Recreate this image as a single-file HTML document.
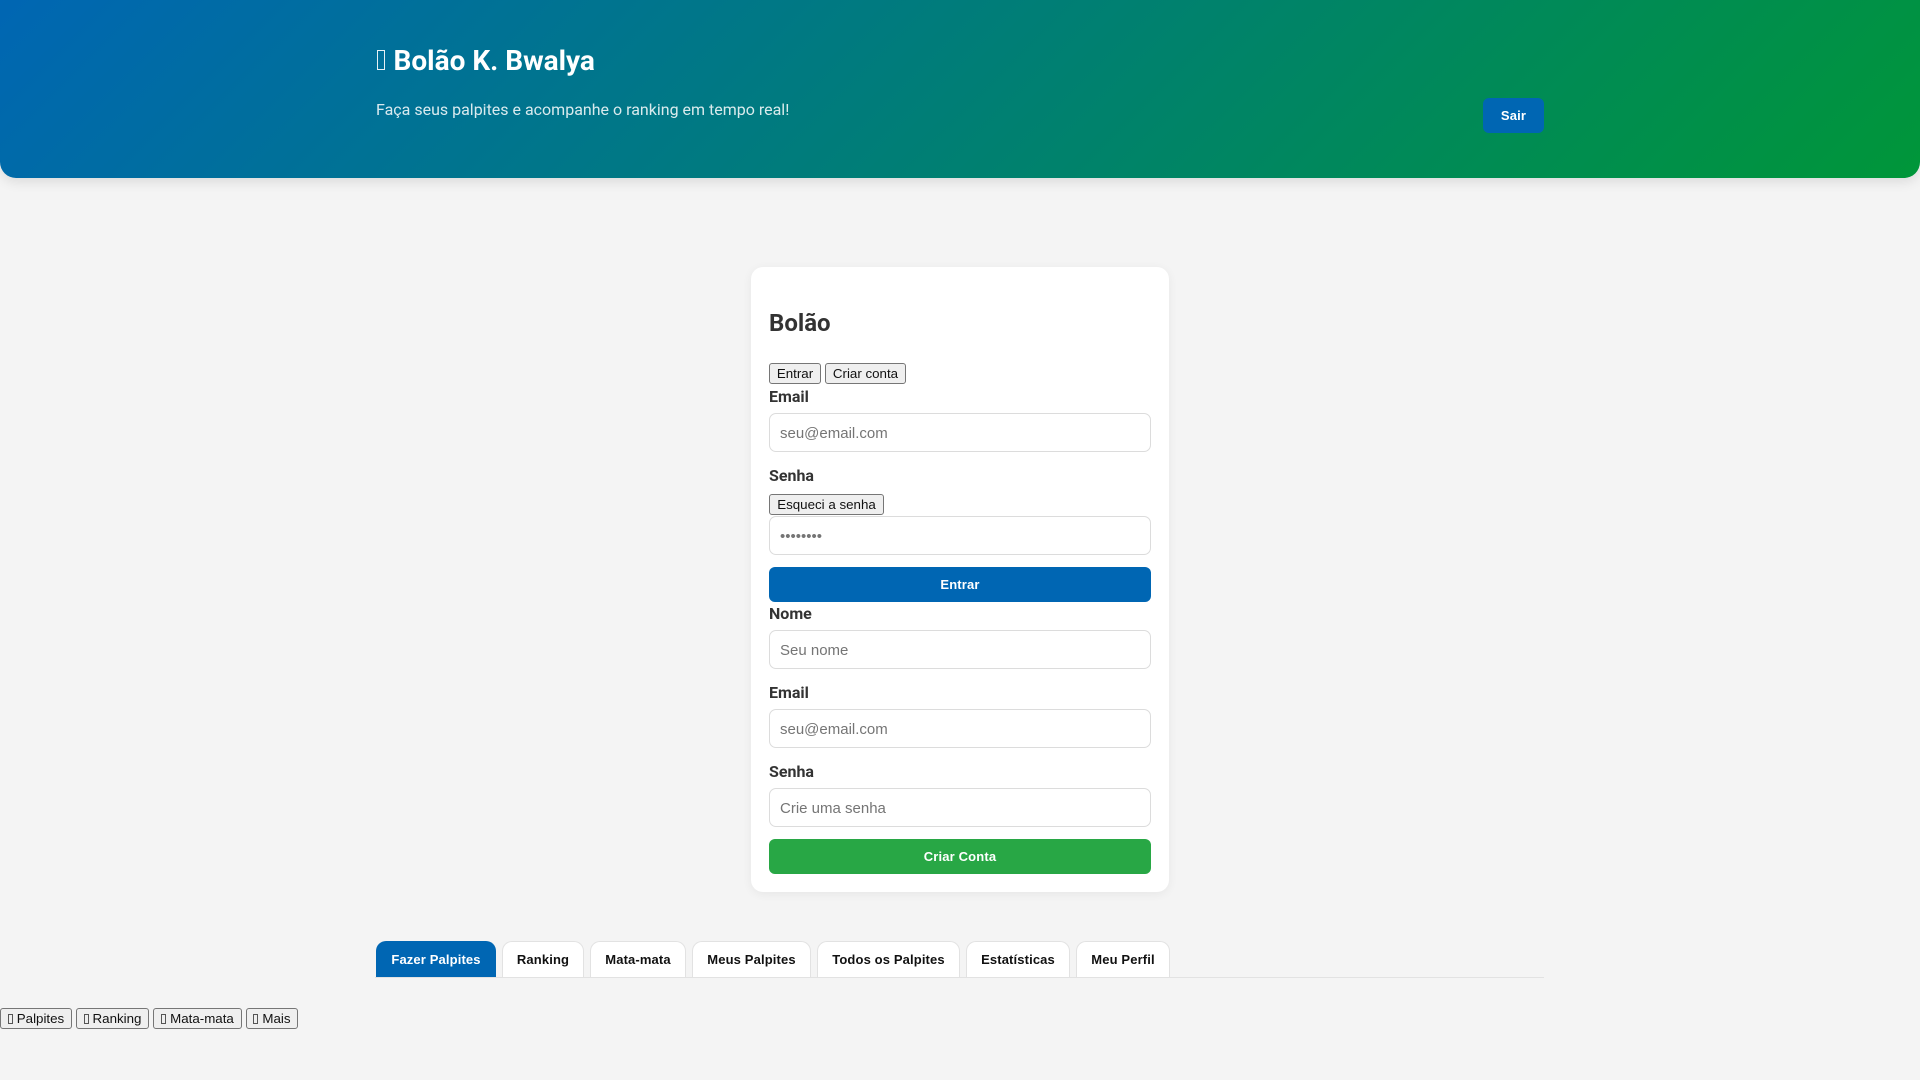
<!DOCTYPE html>
<html lang="pt-BR">
<head>
<meta charset="utf-8">
<title>Bolão K. Bwalya</title>
<style>
*{box-sizing:border-box}
html,body{margin:0;padding:0;width:1920px;height:1080px;overflow:hidden;background:#f4f4f4;font-family:"Roboto","Liberation Sans",sans-serif}
.abs{position:absolute}
.hdr{left:0;top:0;width:1920px;height:178px;background:linear-gradient(135deg,#0066b3,#009639);border-radius:0 0 16px 16px;box-shadow:0 4px 12px rgba(0,0,0,.1);color:#fff}
h1{position:absolute;left:393.5px;top:44px;margin:0;font-size:28px;line-height:34px;font-weight:700;white-space:nowrap;color:#fff}
.tofu{position:absolute;left:377px;top:50px;width:8px;height:20px;border:1px solid #fff;opacity:.9}
.sub{left:376px;top:100px;font-size:16px;line-height:20px;opacity:.85;white-space:nowrap;color:#fff}
.sair{left:1483px;top:98px;width:61px;height:35px;background:#0066b3;color:#fff;border-radius:6px;font:700 13px/35px "Liberation Sans",sans-serif;text-align:center;letter-spacing:.15px}
.card{left:751px;top:267px;width:418px;height:625px;background:#fff;border-radius:12px;box-shadow:0 2px 10px rgba(0,0,0,.06)}
h2{position:absolute;left:769px;top:308px;margin:0;font-size:24px;line-height:30px;font-weight:700;color:#333}
button.d{position:absolute;height:21px;margin:0;padding:1px 0;background:#efefef;border:1px solid #767676;border-radius:3px;color:#111;font:13.333px "Liberation Sans",sans-serif;white-space:nowrap;text-align:center}
button.d i{display:inline-block;width:5px;height:10px;border:1px solid #555;margin-right:4px;vertical-align:-1px}
label{position:absolute;left:769px;font-size:16px;line-height:20px;font-weight:700;color:#333}
input{position:absolute;left:769px;width:382px;height:39px;padding:2px 10px 0;background:#fff;border:1px solid #dcdcdc;border-radius:7px;font:15px "Liberation Sans",sans-serif;outline:0}
input::placeholder{color:#757575;opacity:1}
.btn{left:769px;width:382px;height:35px;border-radius:6px;color:#fff;font:700 13px/35px "Liberation Sans",sans-serif;text-align:center;letter-spacing:.15px}
.tabline{left:375px;top:977px;width:1169px;height:1px;background:#e2e2e2}
.tab{position:absolute;top:941px;height:36px;background:#fff;border:1px solid #e2e2e2;border-bottom:0;border-radius:10px 10px 0 0;color:#111;font:700 13px/36px "Liberation Sans",sans-serif;text-align:center;letter-spacing:.13px;white-space:nowrap}
.tab.on{background:#0066b3;border-color:#0066b3;color:#fff}
</style>
</head>
<body>
<div class="abs hdr"></div>
<div class="tofu"></div>
<h1>Bolão K. Bwalya</h1>
<div class="abs sub">Faça seus palpites e acompanhe o ranking em tempo real!</div>
<div class="abs sair">Sair</div>

<div class="abs card"></div>
<h2>Bolão</h2>
<button class="d" style="left:769px;top:363px;width:52px">Entrar</button>
<button class="d" style="left:825px;top:363px;width:81px">Criar conta</button>
<label style="top:387px">Email</label>
<input style="top:413px" placeholder="seu@email.com">
<label style="top:466px">Senha</label>
<button class="d" style="left:769px;top:494px;width:115px">Esqueci a senha</button>
<input style="top:516px" placeholder="••••••••">
<div class="abs btn" style="top:567px;background:#0066b3">Entrar</div>
<label style="top:604px">Nome</label>
<input style="top:630px" placeholder="Seu nome">
<label style="top:683px">Email</label>
<input style="top:709px" placeholder="seu@email.com">
<label style="top:762px">Senha</label>
<input style="top:788px" placeholder="Crie uma senha">
<div class="abs btn" style="top:839px;background:#28a745">Criar Conta</div>

<div class="abs tabline"></div>
<div class="tab on" style="left:376px;width:120px">Fazer Palpites</div>
<div class="tab" style="left:502px;width:82px">Ranking</div>
<div class="tab" style="left:590px;width:96px">Mata-mata</div>
<div class="tab" style="left:692px;width:119px">Meus Palpites</div>
<div class="tab" style="left:817px;width:143px">Todos os Palpites</div>
<div class="tab" style="left:966px;width:104px">Estatísticas</div>
<div class="tab" style="left:1076px;width:94px">Meu Perfil</div>

<button class="d" style="left:0;top:1008px;width:72px"><i></i>Palpites</button>
<button class="d" style="left:76px;top:1008px;width:73px"><i></i>Ranking</button>
<button class="d" style="left:153px;top:1008px;width:89px"><i></i>Mata-mata</button>
<button class="d" style="left:246px;top:1008px;width:52px"><i></i>Mais</button>
</body>
</html>
